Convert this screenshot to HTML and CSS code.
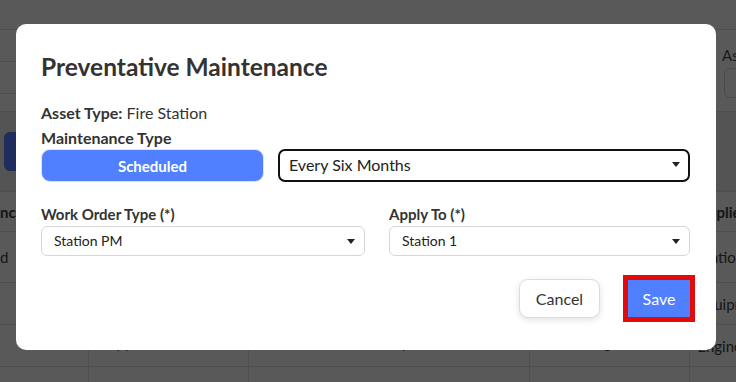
FILE: index.html
```html
<!DOCTYPE html>
<html lang="en">
<head>
  <meta charset="UTF-8" />
  <meta name="viewport" content="width=device-width, initial-scale=1" />
  <title>Preventative Maintenance</title>
  <link rel="stylesheet" href="styles.css">
</head>
<body>

  <div class="page">
    <div class="topbar"></div>
    <div class="filters">
      <div class="filter-lines">
        <div class="line-row"></div>
        <div class="line-row"></div>
      </div>
      <div class="filter-field">
        <div class="filter-label">Asset</div>
        <div class="filter-input"></div>
      </div>
    </div>
    <div class="actions">
      <div class="action-btn"></div>
    </div>
    <table class="grid">
      <tr class="head">
        <td class="c1">nce</td><td></td><td></td><td></td><td class="c5">Applies</td>
      </tr>
      <tr class="r1"><td class="c1">d</td><td></td><td></td><td></td><td class="c5">Station</td></tr>
      <tr class="r2"><td class="c1"></td><td></td><td></td><td></td><td class="c5">Equipment</td></tr>
      <tr class="r3"><td class="c1"></td><td class="low">Apparatus</td><td class="mid">Yearly</td><td class="mid">Engine</td><td class="c5">Engine</td></tr>
      <tr class="r4"><td class="c1"></td><td></td><td></td><td></td><td class="c5"></td></tr>
    </table>
  </div>

  <div class="modal">
    <h2 class="modal-title">Preventative Maintenance</h2>
    <div class="asset"><b>Asset Type:</b> Fire Station</div>
    <div class="field-label big">Maintenance Type</div>
    <div class="type-row">
      <button class="btn-scheduled">Scheduled</button>
      <div class="select select-dark">Every Six Months <span class="caret"></span></div>
    </div>
    <div class="form-row">
      <div class="form-col">
        <div class="field-label">Work Order Type (*)</div>
        <div class="select">Station PM <span class="caret"></span></div>
      </div>
      <div class="form-col">
        <div class="field-label">Apply To (*)</div>
        <div class="select">Station 1 <span class="caret"></span></div>
      </div>
    </div>
    <div class="footer">
      <button class="btn-cancel">Cancel</button>
      <button class="btn-save">Save</button>
    </div>
  </div>

</body>
</html>
```

FILE: styles.css
```css
* { margin: 0; padding: 0; box-sizing: border-box; }
body {
  font-family: 'Lato', 'Liberation Sans', sans-serif;
  background: #595959;
  width: 736px;
  height: 382px;
  overflow: hidden;
  position: relative;
}

/* dimmed page behind the dialog */
.page { color: #151515; font-size: 15px; }
.topbar { height: 30px; border-bottom: 1px solid #4f4f4f; }
.filters {
  height: 82px;
  display: flex;
  justify-content: space-between;
  border-bottom: 1px solid #4f4f4f;
}
.filter-lines { width: 40px; }
.line-row { height: 32px; border-bottom: 1px solid #4f4f4f; }
.filter-field { width: 14px; padding-top: 16px; }
.filter-label { font-size: 15px; color: #1a1a1a; white-space: nowrap; }
.filter-input {
  margin-top: 4px;
  width: 40px;
  height: 30px;
  border: 1px solid #4a4a4a;
  border-radius: 6px;
  margin-left: 2px;
}
.actions {
  height: 79px;
  background: #545454;
  padding: 20px 4px;
  border-bottom: 1px solid #4f4f4f;
}
.action-btn {
  width: 60px;
  height: 39px;
  background: #1f2d5c;
  border-radius: 6px;
}
.grid { border-collapse: collapse; width: 780px; table-layout: fixed; }
.grid td {
  border-top: 1px solid #4f4f4f;
  border-left: 1px solid #4f4f4f;
  padding: 0 8px;
  white-space: nowrap;
  overflow: hidden;
}
.grid .head td { height: 40px; font-weight: 700; }
.grid .r1 td { height: 51px; }
.grid .r2 td, .grid .r3 td { height: 42px; }
.grid .r4 td { height: 42px; }
.grid .c1 { width: 88px; border-left: none; padding-left: 0; }
.grid td:nth-child(2) { width: 160px; padding-left: 18px; }
.grid td:nth-child(3) { width: 281px; }
.grid td:nth-child(4) { width: 160px; }
.grid .r3 .low, .grid .r3 .mid { vertical-align: top; padding-top: 8px; }
.grid .mid { text-align: center; }
.grid .c5 { padding-left: 8px; }

/* dialog */
.modal {
  position: absolute;
  left: 16px;
  top: 24px;
  width: 700px;
  height: 326px;
  background: #fff;
  border-radius: 10px;
  padding: 27px 26px 0 25px;
  color: #333;
}
.modal-title {
  font-size: 24.5px;
  font-weight: 700;
  line-height: 32px;
  margin-bottom: 20px;
}
.asset { font-size: 16px; line-height: 19px; margin-bottom: 6px; }
.asset b { font-weight: 700; }
.field-label { font-size: 15px; font-weight: 700; line-height: 18px; margin-bottom: 3px; }
.field-label.big { font-size: 16px; line-height: 19px; margin-bottom: 2px; }
.type-row { display: flex; gap: 14px; align-items: flex-start; margin-bottom: 23px; }
.btn-scheduled {
  width: 223px;
  height: 33px;
  background: #5080ff;
  border: 1px solid #dfe3ea;
  border-radius: 9px;
  color: #fff;
  font-family: inherit;
  font-size: 15px;
  font-weight: 700;
}
.select {
  position: relative;
  height: 30px;
  border: 1px solid #d6d6d6;
  border-radius: 6px;
  padding: 0 12px;
  font-size: 14px;
  line-height: 28px;
  color: #222;
}
.select-dark {
  flex: 1;
  height: 33px;
  border: 2px solid #111;
  border-radius: 7px;
  font-size: 16px;
  padding: 0 9px;
}
.caret {
  position: absolute;
  right: 9px;
  top: 12px;
  width: 0;
  height: 0;
  border-left: 4px solid transparent;
  border-right: 4px solid transparent;
  border-top: 5px solid #222;
}
.select-dark .caret { top: 11px; right: 8px; }
.form-row { display: grid; grid-template-columns: 324px 1fr; gap: 24px; }
.field-label + .select { margin-top: 2px; }
.footer { display: flex; justify-content: flex-end; gap: 28px; margin-top: 23px; }
.btn-cancel {
  width: 81px;
  height: 39px;
  background: #fff;
  border: 1px solid #dcdcdc;
  border-radius: 9px;
  box-shadow: 0 2px 6px rgba(0,0,0,0.12);
  font-family: inherit;
  font-size: 16px;
  color: #333;
}
.btn-save {
  width: 62px;
  height: 37px;
  margin-top: 1px;
  background: #5080ff;
  border: none;
  outline: 5px solid #e30a0a;
  color: #fff;
  font-family: inherit;
  font-size: 16px;
}
```
